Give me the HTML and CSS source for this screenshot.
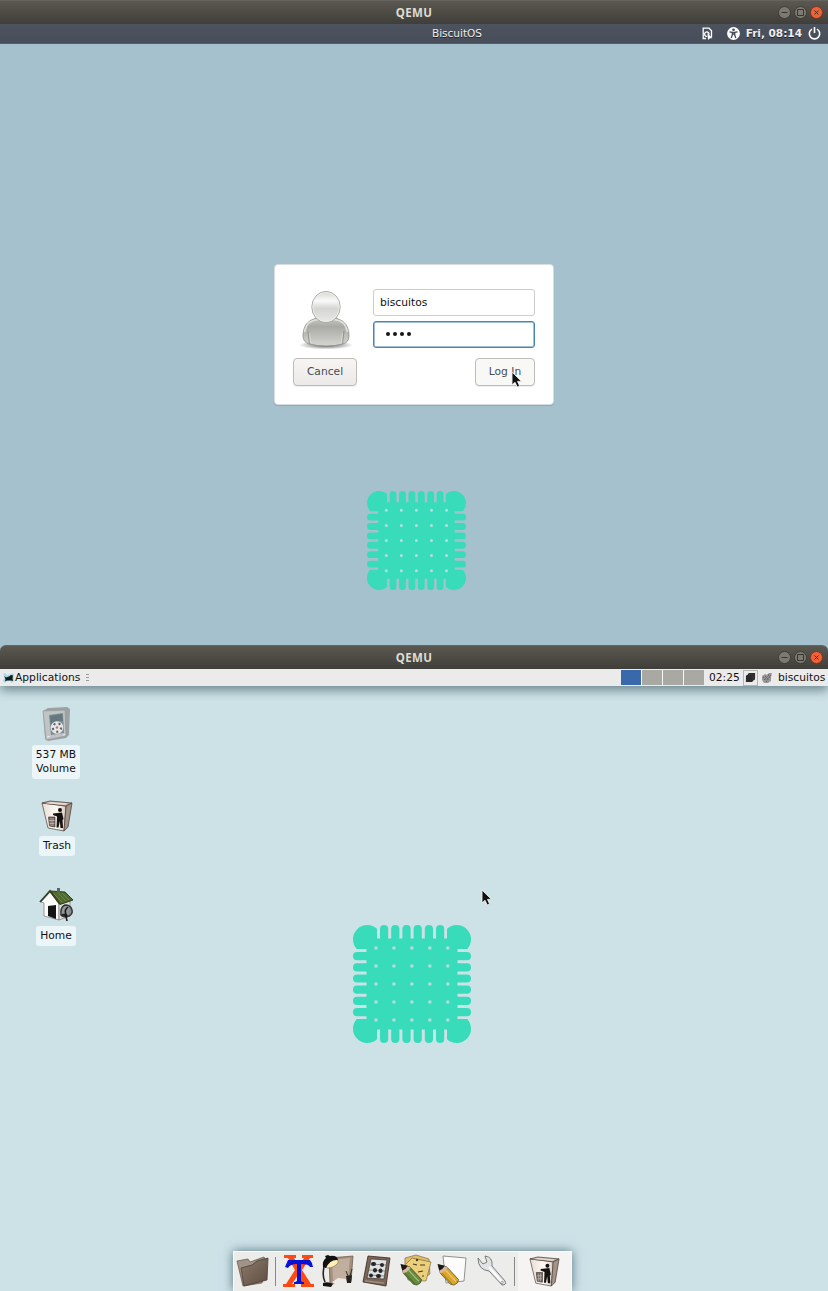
FILE: index.html
```html
<!DOCTYPE html>
<html lang="en">
<head>
<meta charset="utf-8">
<title>QEMU</title>
<link rel="stylesheet" href="styles.css">
</head>
<body>
<svg class="defs" width="0" height="0" aria-hidden="true">
  <defs>
    <linearGradient id="silver" x1="0" y1="0" x2="0" y2="1"><stop offset="0" stop-color="#c9cac5"/><stop offset=".3" stop-color="#a9aaa4"/><stop offset="1" stop-color="#d5d5d1"/></linearGradient>
    <linearGradient id="head" x1="0" y1="0" x2="0" y2="1"><stop offset="0" stop-color="#d4d5d1"/><stop offset=".3" stop-color="#fafafa"/><stop offset=".55" stop-color="#d4d6d2"/><stop offset="1" stop-color="#e9e9e7"/></linearGradient>
    <radialGradient id="ground"><stop offset="0" stop-color="#555"/><stop offset="1" stop-color="#555" stop-opacity="0"/></radialGradient>
    <linearGradient id="wood" x1="0" y1="0" x2="1" y2="1"><stop offset="0" stop-color="#8d7a6a"/><stop offset="1" stop-color="#5d4d41"/></linearGradient>
    <linearGradient id="bin" x1="0" y1="0" x2="1" y2="0"><stop offset="0" stop-color="#e8dcd5"/><stop offset=".6" stop-color="#fffaf6"/><stop offset="1" stop-color="#d8cac2"/></linearGradient>
    <symbol id="biscuit" viewBox="0 0 118 118">
      <g fill="#38dcbb">
        <rect x="13.5" y="13.5" width="91" height="91"/>
        <g id="corner"><path d="M14.3 0Q20 0 24 3.8V24H3.8Q0 20 0 14.3A14.3 14.3 0 0 1 14.3 0Z"/></g>
        <use href="#corner" transform="translate(118 0) scale(-1 1)"/>
        <use href="#corner" transform="translate(0 118) scale(1 -1)"/>
        <use href="#corner" transform="translate(118 118) scale(-1 -1)"/>
        <g id="teeth"><rect x="27" y="0" width="8.2" height="118" rx="4"/><rect x="38.2" y="0" width="8.2" height="118" rx="4"/><rect x="49.4" y="0" width="8.2" height="118" rx="4"/><rect x="60.6" y="0" width="8.2" height="118" rx="4"/><rect x="71.8" y="0" width="8.2" height="118" rx="4"/><rect x="83" y="0" width="8.2" height="118" rx="4"/></g>
        <use href="#teeth" transform="translate(118 0) rotate(90)"/>
      </g>
      <g class="holes"><path d="M23 23H96M23 41H96M23 59H96M23 77H96M23 95H96"/></g>
    </symbol>
    <symbol id="pointer" viewBox="0 0 12 18"><path d="M1 1V14L4 11.3L6.2 16L8.6 14.9L6.5 10.4H10.5Z" fill="#111" stroke="#eee" stroke-width=".9"/></symbol>
    <symbol id="trash" viewBox="0 0 32 32">
      <path d="M1 3L25 6L23 31L7 28Z" fill="url(#bin)" stroke="#60534c" stroke-width=".8"/>
      <path d="M1 3L9 1L31 3L25 6Z" fill="#baaaa0" stroke="#55483f" stroke-width=".8"/>
      <path d="M4 3.2L10 2L27 3.6L24 5Z" fill="#e9ddd5"/>
      <path d="M25 6L31 3L27 27L23 31Z" fill="#a3948a" stroke="#50443c" stroke-width=".8"/>
      <circle cx="19" cy="10" r="2" fill="#15110f"/>
      <path d="M12 13.5L21 12.5L22.5 19L21.5 20L22 28H19.5L18.8 21L17.5 27.5H15.5L16 16.5L12 15Z" fill="#15110f"/>
      <path d="M7.5 17H14V27L8.5 26Z" fill="#736258" stroke="#49403a" stroke-width=".7"/><path d="M10 18V26M12 18V26M8 20.5H13.5M8.5 23.5H13.5" stroke="#ddd" stroke-width=".5"/>
    </symbol>
    <symbol id="pencil" viewBox="0 0 24 24">
      <path d="M1 1L10 3L23 17Q23 21 18 23L14 22L3 10Z" fill="currentColor" stroke="#373521" stroke-width=".7"/><path d="M1 1L11 3.5Q9 9 3 10Z" fill="#dbb6a0"/><path d="M0 0L8 2Q6 6 2 7Z" fill="#191919"/><path d="M9 7L20 19" stroke="#fff" stroke-width="1.2" opacity=".45"/><path d="M5 10L16 22" stroke="#222" opacity=".4"/>
    </symbol>
  </defs>
</svg>

<section class="window greeter">
  <header class="titlebar"><span class="caption">QEMU</span>
    <div class="controls"><svg width="13" height="13" viewBox="0 0 13 13"><circle cx="6.5" cy="6.5" r="6"/><path d="M3.5 6.5H9.5"/></svg><svg width="13" height="13" viewBox="0 0 13 13"><circle cx="6.5" cy="6.5" r="6"/><path d="M3.5 3.5H9.5V9.5H3.5Z"/></svg><svg class="close" width="13" height="13" viewBox="0 0 13 13"><circle cx="6.5" cy="6.5" r="6"/><path d="M4.5 4.5L8.5 8.5M8.5 4.5L4.5 8.5"/></svg></div>
  </header>
  <div class="statusbar"><span class="hostname">BiscuitOS</span>
    <div class="indicators">
      <svg class="session" width="11" height="13" viewBox="0 0 11 13"><path d="M4 11.5H1.2V1.2H7L9.5 3.7V10" fill="none" stroke="#fff" stroke-width="1.3"/><path d="M7 7.5A2.2 2.2 0 1 0 5.3 9.3" fill="none" stroke="#fff" stroke-width="1.3"/><path d="M5.5 6L10.5 11.2H8L6 13Z" fill="#fff"/></svg>
      <svg class="access" width="13" height="13" viewBox="0 0 13 13"><circle cx="6.5" cy="6.5" r="6.4" fill="#fff"/><circle cx="6.5" cy="2.7" r="1.3" fill="#414853"/><path d="M2.5 4.8L5.3 5.3V8L4.2 11M10.5 4.8L7.7 5.3V8L8.8 11M5.3 5.3H7.7M5.3 7H7.7" fill="none" stroke="#414853" stroke-width="1.3"/></svg>
      <b class="clock">Fri, 08:14</b>
      <svg class="power" width="13" height="13" viewBox="0 0 13 13"><path d="M4 2.1A5.2 5.2 0 1 0 9 2.1M6.5 0V6" fill="none" stroke="#fff" stroke-width="1.6"/></svg>
    </div>
  </div>
  <main class="login-area">
    <form class="login">
      <div class="credentials">
        <svg class="avatar" width="52" height="60" viewBox="0 0 52 60">
          <ellipse cx="26" cy="55" rx="27" ry="4.5" fill="url(#ground)"/>
          <path d="M3 46C3 34 10 29 18 28H34C42 29 49 34 49 46Q49 52 43 54Q26 58 9 54Q3 52 3 46Z" fill="url(#silver)" stroke="#8d8e88" stroke-width=".8"/>
          <path d="M4.5 42C6 34 11 30 18 29.5H34C41 30 46 34 47.5 42" fill="none" stroke="#e2e2de" stroke-width="1.6"/>
          <path d="M9.5 54L8 41M42.5 54L44 41" stroke="#85867f" stroke-width=".8"/><path d="M10.7 53L9.5 43M41.3 53L42.5 43" stroke="#eee" opacity=".5"/>
          <ellipse cx="26" cy="17" rx="14.2" ry="15.6" fill="url(#head)" stroke="#999a95" stroke-width=".8"/>
          <ellipse cx="26" cy="17" rx="13.2" ry="14.6" fill="none" stroke="#f0f0ee" stroke-width=".8"/>
        </svg>
        <div class="fields"><div class="field">biscuitos</div><div class="field focused"><i></i><i></i><i></i><i></i></div></div>
      </div>
      <div class="actions"><button type="button" class="cancel">Cancel</button><button type="button" class="submit">Log In</button></div>
      <svg class="pointer login-pointer"><use href="#pointer"/></svg>
    </form>
    <svg class="biscuit small"><use href="#biscuit"/></svg>
  </main>
</section>

<section class="window session-window">
  <header class="titlebar rounded"><span class="caption">QEMU</span>
    <div class="controls"><svg width="13" height="13" viewBox="0 0 13 13"><circle cx="6.5" cy="6.5" r="6"/><path d="M3.5 6.5H9.5"/></svg><svg width="13" height="13" viewBox="0 0 13 13"><circle cx="6.5" cy="6.5" r="6"/><path d="M3.5 3.5H9.5V9.5H3.5Z"/></svg><svg class="close" width="13" height="13" viewBox="0 0 13 13"><circle cx="6.5" cy="6.5" r="6"/><path d="M4.5 4.5L8.5 8.5M8.5 4.5L4.5 8.5"/></svg></div>
  </header>
  <nav class="panel">
    <svg class="mouse" width="11" height="10" viewBox="0 0 11 10"><path d="M0 1L2 0L4 2L8 1L10 0L11 2V8L9 10L7 8L4 8L1 10L0 7L2 5Z" fill="#a9dbe6"/><path d="M1 3L3 4.5L6 3.5L8 2L10 2.5L9.5 5L10 8L8 7.5L4 7.5L2 8.5L2.5 6Z" fill="#121a1d"/></svg>
    <span class="apps">Applications</span><span class="grip"></span>
    <div class="workspaces"><i class="active"></i><i></i><i></i><i></i></div>
    <span class="time">02:25</span>
    <span class="tray"><svg width="11" height="11" viewBox="0 0 12 12"><path d="M1 5Q1 3 3 3Q3 1 5 1H11V7Q11 9 9 9Q9 11 7 11H1Z" fill="#292929"/><path d="M4 3H9V9" stroke="#3d3d3d" fill="none"/></svg></span>
    <svg class="user-icon" width="12" height="12" viewBox="0 0 12 12"><path d="M1 4L4 2L6 3L8 1L11 1L10 5V9L7 11L3 11L1 8Z" fill="#999"/><path d="M2 5L6 8M4 4L8 8M7 2L9 6M3 8L8 3M5 10L10 3" stroke="#606060" stroke-dasharray="1.5 1"/></svg>
    <span class="username">biscuitos</span>
  </nav>
  <main class="desktop">
    <div class="shortcuts">
      <div class="shortcut"><svg width="34" height="34" viewBox="0 0 34 34"><path d="M4 4L9 1L28 0L31 2L30 28L27 31L9 34L6 31Z" fill="#9ca2a3"/><path d="M4 4L26 3L27 29L7 33Z" fill="#c0c4c4" stroke="#959c9d" stroke-width=".8"/><path d="M10 8L24 6L25 26L12 28Z" fill="#7b8d92"/><path d="M11 9L23 7L24 14Q16 13 12 19Z" fill="#647980"/><circle cx="18" cy="20.5" r="6.3" fill="#e7e7e7"/><circle cx="18" cy="20.5" r="4.2" fill="none" stroke="#625f60" stroke-width="2" stroke-dasharray="2 3.2"/><circle cx="18" cy="20.5" r="1.3" fill="#a18086"/><path d="M8 30L11 29.5M24 28L26 27.5" stroke="#eee"/></svg><span>537 MB<br>Volume</span></div>
      <div class="shortcut bin"><svg width="32" height="32"><use href="#trash"/></svg><span>Trash</span></div>
      <div class="shortcut home"><svg width="34" height="34" viewBox="0 0 34 34"><path d="M2 14L11 4L20 16V32L5 28V15Z" fill="#fbfbfa" stroke="#777" stroke-width=".7"/><path d="M20 16L31 13V28L20 32Z" fill="#dfe1df" stroke="#777" stroke-width=".7"/><path d="M11 3L26 4L34 12L21 16.5Z" fill="#506b2d" stroke="#2c3d20"/><path d="M1 14L11 3L21 16" fill="none" stroke="#344224" stroke-width="1.8"/><path d="M15 6L23 14M19 5L27 13M23 5L30 12" stroke="#78934e" stroke-width=".7"/><path d="M18 0H21V6H18Z" fill="#5e645b"/><path d="M9 18L17 17V31L9 28Z" fill="#141414"/><path d="M22 27Q21 19 26 17Q32 17 33 22Q34 26 30 28Q24 30 22 27Z" fill="#777c7d" fill-opacity=".75" stroke="#333" stroke-width="1.5"/><path d="M23 27Q27 25 28 33M29 19Q24 23 28 28" fill="none" stroke="#191919" stroke-width="1.6"/></svg><span>Home</span></div>
    </div>
    <svg class="biscuit large"><use href="#biscuit"/></svg>
    <svg class="pointer desk-pointer"><use href="#pointer"/></svg>
    <div class="dock">
      <svg width="34" height="34" viewBox="0 0 34 34"><path d="M1 7L12 5L14 8L28 3L30 7L26 29L7 32Z" fill="#a19386" stroke="#5b4d43" stroke-width=".7"/><path d="M5 14L16 11L21 7L32 4L31 26L8 32Z" fill="url(#wood)" stroke="#4d3d33" stroke-width=".8"/></svg>
      <i class="divider first"></i>
      <svg class="xterm" width="34" height="34" viewBox="0 0 34 34"><path d="M2 1H14V4H12L17 12L22 4H20V1H31V4H28L20 16L29 30H32V33H19V30H21L16 21L10 30H13V33H1V30H4L13 16L6 4H2Z" fill="#ff4912"/><path d="M6 6H28Q30 8 31 13H28Q27 10 19 10V26Q19 28 22 28V30H12V28Q15 28 15 26V10Q8 10 6 14L3 13Z" fill="#0712d6"/></svg>
      <svg width="34" height="34" viewBox="0 0 34 34"><path d="M8 4L32 2L30 28L9 30Z" fill="#a58f7e" stroke="#665446" stroke-width=".7"/><path d="M11 6L29 4L27 25L12 26Z" fill="#c1ae9c"/><path d="M3 13Q1 22 4 28" fill="none" stroke="#222" stroke-width="1.6"/><path d="M5 13Q6 7 11 5Q18 4 17 9Q13 14 6 14Z" fill="#ffeeb5" stroke="#665736" stroke-width=".5"/><path d="M2 13Q1 7 5 4L4 2L7 1L9 2Q16 1 17 6Q9 5 5 14Z" fill="#111"/><path d="M2 29Q7 27 12 30L10 33L2 32Z" fill="#161616"/><path d="M11 28L17 24L25 25L28 30L15 31Z" fill="#edeae7"/><path d="M25 22L31 21L30 29L26 29Z" fill="#26221f"/><path d="M27 22L25 17M29 22L31 15" stroke="#302820"/></svg>
      <svg width="34" height="34" viewBox="0 0 34 34"><path d="M9 2L31 4L27 32L4 28Z" fill="#7b6657" stroke="#34281f" stroke-width=".8"/><path d="M12 5L28 6L25 25L8 24Z" fill="#e0e1e2" stroke="#3b322b" stroke-width=".7"/><path d="M11 10L27 11M10 16L26 17M9 21L25 22" stroke="#666" stroke-width=".7"/><g fill="#24282a"><rect x="12" y="8" width="5" height="4" rx="2"/><rect x="21" y="9" width="4" height="4" rx="2"/><rect x="14" y="14" width="4" height="4.5" rx="2"/><rect x="19.5" y="14.5" width="4" height="4.5" rx="2"/><rect x="10" y="19.5" width="4" height="4" rx="2"/><rect x="17" y="20" width="5" height="4" rx="2"/></g><path d="M6 27L25 29" stroke="#a18c7c" stroke-width="1.5"/></svg>
      <svg width="36" height="34" viewBox="0 0 36 34"><path d="M8 4L19 1L32 5L33 20L20 28L8 20Z" fill="#dfbd69" stroke="#806c3d" stroke-width=".7"/><path d="M8 11L15 4L34 8L29 27L11 26Z" fill="#ebcf7b" stroke="#806c3d" stroke-width=".7"/><path d="M16 10L20 11M23 11H28M21 18L26 17M25 22H27" stroke="#463920" stroke-width="1.2"/><circle cx="20" cy="6" r="1.2" fill="#4a3e2f"/><svg class="green" x="2" y="10" width="25" height="22"><use href="#pencil"/></svg></svg>
      <svg class="editor" width="34" height="34" viewBox="0 0 34 34"><path d="M9 2L32 4L30 27L12 29Z" fill="#fcfcfc" stroke="#777" stroke-width=".8"/><svg class="gold" x="2" y="10" width="25" height="22"><use href="#pencil"/></svg></svg>
      <svg class="wrench" width="34" height="34" viewBox="0 0 34 34"><path d="M3 4L8 10L12 8L10 2Q18 3 17 12L30 27Q32 31 27 31L14 17Q3 16 3 4Z" fill="#e2e3e4" stroke="#797c7e" stroke-width="1"/><path d="M14 13L27 28" stroke="#fff" stroke-width="2"/><circle cx="27" cy="28.5" r="1.2" fill="#fff" stroke="#777" stroke-width=".7"/></svg>
      <i class="divider last"></i>
      <div class="dock-bin"><svg width="31" height="31"><use href="#trash"/></svg></div>
    </div>
  </main>
</section>
</body>
</html>
```
FILE: styles.css
```css
* { box-sizing: border-box; }
body { margin: 0; width: 828px; height: 1291px; overflow: hidden; background: #a6c1ce; font-family: "DejaVu Sans", sans-serif; font-size: 11px; color: #111; }
svg { display: block; flex: none; overflow: visible; }
.defs { position: absolute; }
.window { display: flex; flex-direction: column; }
.greeter { height: 645px; background: #a6c1ce; }
.session-window { height: 646px; }
.titlebar { height: 24px; flex: none; display: grid; grid-template-columns: 1fr auto 1fr; align-items: center; background: linear-gradient(#5a5850, #403e39); border-top: 1px solid #65635b; color: #dfdbd2; }
.rounded { border-radius: 6px 6px 0 0; }
.caption { grid-column: 2; font: bold 11.5px/21px "Noto Sans", sans-serif; letter-spacing: .3px; padding-bottom: 1px; }
.controls { display: flex; gap: 3px; justify-content: flex-end; padding: 0 5px 1px 0; }
.controls circle { fill: #7b7970; stroke: #35342f; stroke-width: .8; }
.controls path { fill: none; stroke: #36342f; stroke-width: 1; }
.controls .close circle { fill: #ee6236; stroke: #733019; }
.statusbar { height: 20px; flex: none; display: grid; grid-template-columns: 1fr auto 1fr; align-items: center; background: linear-gradient(#4c535f, #474e5a); color: #eee; text-shadow: 0 1px #222; border-bottom: 1px solid #545d69; }
.hostname { grid-column: 2; font-size: 10.5px; padding: 0 0 1px 86px; }
.indicators { display: flex; align-items: center; justify-content: flex-end; padding-right: 7px; }
.access { margin-left: 14px; }
.clock { font-size: 10.5px; margin-left: 6px; padding-bottom: 1px; }
.power { margin-left: 6px; }
.login-area { display: flex; flex-direction: column; align-items: center; padding-top: 220px; }
.login { position: relative; width: 280px; height: 141px; background: #fff; border: 1px solid #d9dddd; border-radius: 4px; padding: 24px 18px 17px; box-shadow: 0 1px 1px #8faab6; }
.credentials { display: flex; justify-content: space-between; }
.avatar { margin: 1px 0 0 7px; }
.fields { display: flex; flex-direction: column; gap: 5px; }
.field { width: 162px; height: 27px; border: 1px solid #cfcbc9; border-radius: 3px; padding: 0 6px; line-height: 25px; font-size: 10.7px; }
.focused { border: 1px solid #4784b4; box-shadow: inset 0 0 0 .5px #4784b4; display: flex; align-items: center; gap: 3px; padding: 0 0 1px 12px; }
.focused i { width: 4px; height: 4px; border-radius: 50%; background: #161616; }
.actions { display: flex; justify-content: space-between; margin-top: 8px; }
.actions button { height: 28px; border: 1px solid #bebbb8; border-radius: 4px; background: linear-gradient(#f6f5f4, #eceae8); font: 10.7px "DejaVu Sans", sans-serif; color: #484d50; padding: 0 0 2px; box-shadow: 0 1px 1px #eee; }
.actions .cancel { width: 64px; }
.actions .submit { width: 60px; background: #f8f8f7; }
.pointer { position: absolute; width: 12px; height: 18px; }
.login-pointer { left: 236px; top: 106px; }
.small { width: 99px; height: 99px; margin: 86px 0 0 5px; }
.holes path { fill: none; stroke: #b5dddc; stroke-width: 3.6; stroke-linecap: round; stroke-dasharray: 0 17.95; }
.panel { z-index: 1; height: 17px; flex: none; display: flex; align-items: center; background: #ebebeb; position: relative; padding: 0 3px; box-shadow: 0 4px 11px #6b838b; white-space: nowrap; clip-path: inset(0 0 -18px); }
.apps { width: 65px; margin-left: 1px; font-size: 10.7px; }
.grip { width: 3px; height: 7px; margin-left: 6px; background: repeating-linear-gradient(#999 0 1px, transparent 1px 3px); }
.workspaces { display: flex; gap: 1px; margin-left: auto; background: #f7f7f7; }
.workspaces i { width: 20px; height: 15px; background: #aaa8a3; }
.workspaces .active { background: #3969aa; }
.time { width: 31px; margin-left: 5px; font-size: 10.7px; }
.tray { display: grid; place-items: center; border: 1px solid #b5b5b5; width: 15px; height: 16px; margin-left: 3px; }
.user-icon { margin-left: 3px; }
.username { width: 47px; margin-left: 5px; font-size: 10.7px; }
.desktop { position: relative; height: 605px; background: #cde2e7; overflow: hidden; display: flex; flex-direction: column; align-items: center; }
.shortcuts { width: 112px; height: 239px; align-self: flex-start; display: flex; flex-direction: column; align-items: center; padding-top: 21px; }
.shortcut { display: flex; flex-direction: column; align-items: center; }
.shortcut span { display: block; background: #ecf5f7; border-radius: 3px; text-align: center; line-height: 14px; padding: 3px 4px; margin-top: 4px; font-size: 10.7px; }
.shortcut:first-child span { height: 34px; }
.bin { margin: 21px 0 0 2px; }
.home { margin-top: 32px; }
.large { width: 118px; height: 118px; margin: 0 4px 0 0; }
.desk-pointer { left: 481px; top: 203px; }
.dock { width: 339px; height: 40px; margin: auto 23px 0 0; display: flex; align-items: center; background: #ececeb; border: 1px solid #fafafa; border-bottom: 0; padding-left: 2px; box-shadow: 0 0 10px #557580; }
.dock > svg { margin-bottom: 2px; }
.divider { width: 1px; height: 29px; background: #888; }
.first { margin: 0 6px 0 5px; }
.xterm { margin-right: 5px; }
.dock > .xterm + svg, .dock > .xterm + svg + svg { margin-right: 4px; }
.editor { margin-left: 1px; }
.wrench { margin-left: 7px; }
.green { color: #678c39; }
.gold { color: #dca728; }
.last { margin-left: 5px; }
.dock-bin { height: 39px; flex: 1; margin-left: 3px; display: grid; place-items: center; background: #f5f4f2; }
```
